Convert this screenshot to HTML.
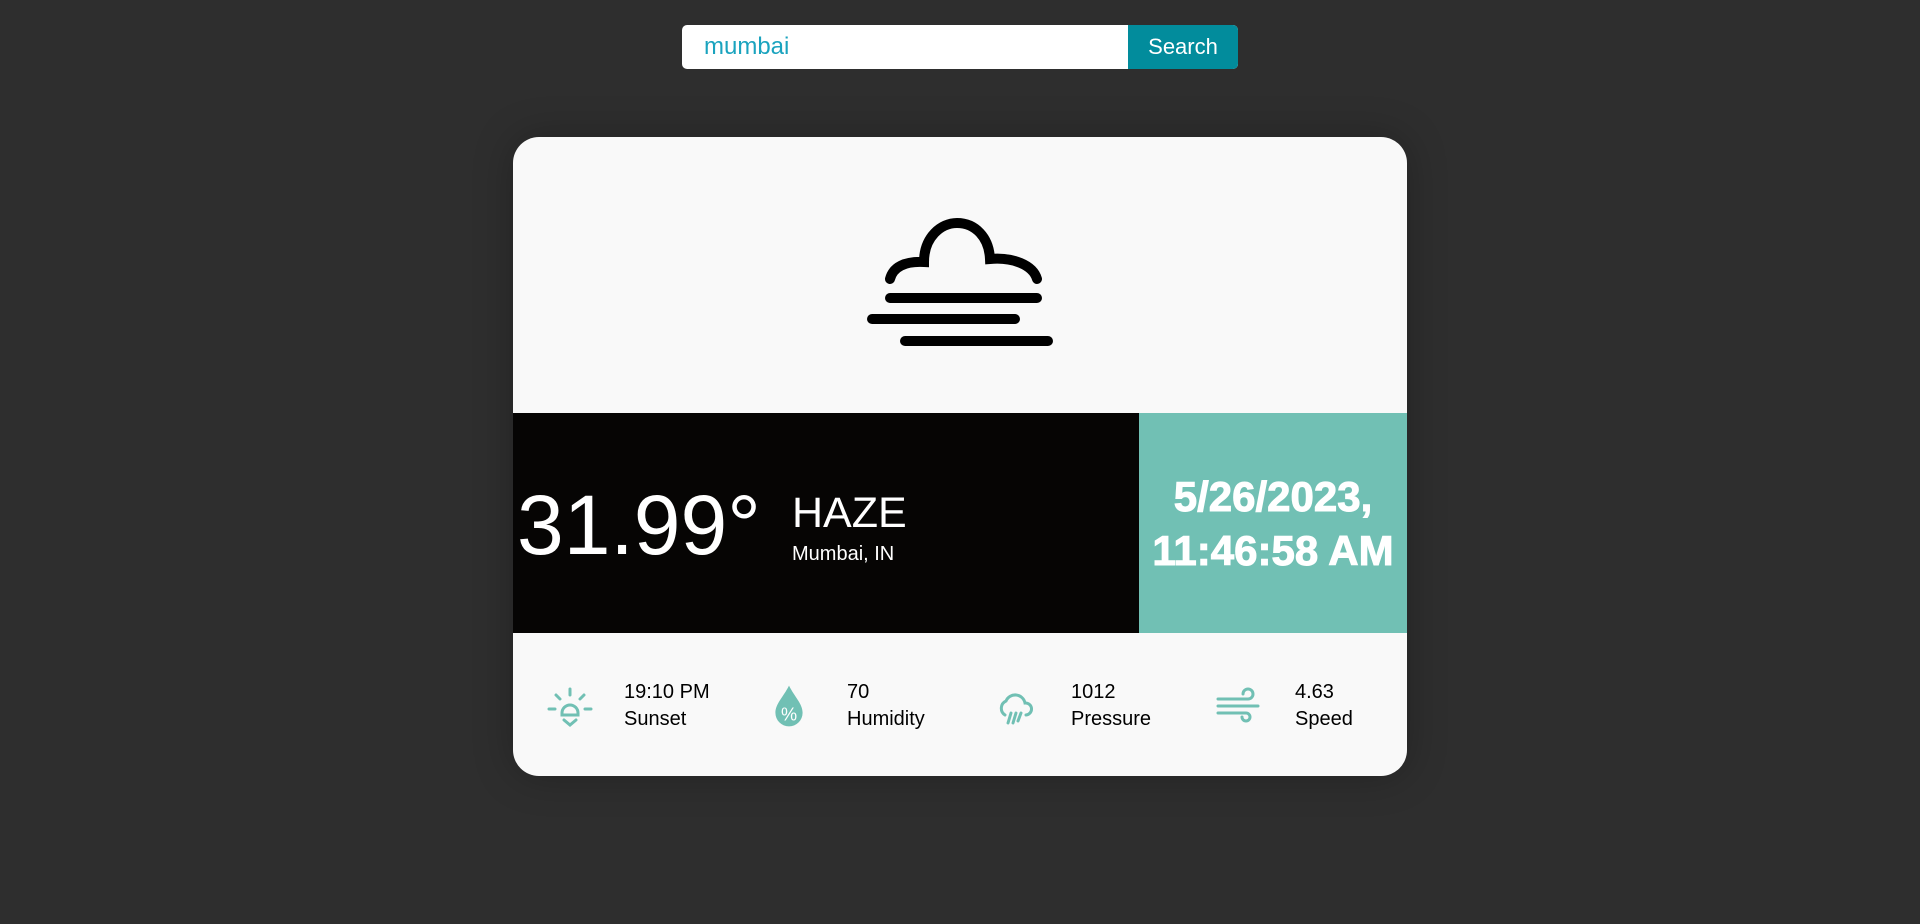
<!DOCTYPE html>
<html><head><style>
*{margin:0;padding:0;box-sizing:border-box}
body{width:1920px;height:924px;background:#2e2e2e;font-family:"Liberation Sans",sans-serif;position:relative;overflow:hidden}
.search{position:absolute;left:682px;top:25px;width:556px;height:44px;background:#fff;border-radius:5px;overflow:hidden}
.search span{position:absolute;left:22px;top:8px;font-size:24px;color:#1aa3be}
.search .btn{position:absolute;right:0;top:0;width:110px;height:44px;background:#028c9c;color:#fff;font-size:22px;text-align:center;line-height:44px}
.card{position:absolute;left:513px;top:137px;width:894px;height:639px;background:#f9f9f9;border-radius:26px;overflow:hidden;box-shadow:0 0 40px rgba(0,0,0,.25)}
.mid{position:absolute;left:0;top:276px;width:894px;height:220px;background:#060504}
.teal{position:absolute;left:626px;top:0;width:268px;height:220px;background:#71c0b4;color:#fff;font-weight:bold;font-size:42px;text-align:center;line-height:54px;padding-top:57px;-webkit-text-stroke:1px #fff}
.temp{position:absolute;left:4px;top:70px;font-size:84px;color:#fff;line-height:1}
.cond{position:absolute;left:279px;top:79px;font-size:43px;color:#fff;line-height:1}
.loc{position:absolute;left:279px;top:130px;font-size:20px;color:#fff}
.item{position:absolute;top:542px;font-size:20px;color:#000;line-height:27px}
.ic{position:absolute;top:550px}
</style></head><body>
<div class="search"><span>mumbai</span><div class="btn">Search</div></div>
<div class="card">
<svg style="position:absolute;left:0;top:0" width="894" height="276" viewBox="0 0 894 276">
<g fill="none" stroke="#000" stroke-width="10" stroke-linecap="round">
<path d="M377 142 C380 130 392 124 411 125 C411 100 428 86 444 86 C462 86 476 100 477 122 C500 120 520 128 524 142"/>
<path d="M377 161 H524"/><path d="M359 182 H502"/><path d="M392 204 H535"/>
</g></svg>
<div class="mid">
<div class="temp">31.99°</div>
<div class="cond">HAZE</div>
<div class="loc">Mumbai, IN</div>
<div class="teal">5/26/2023,<br>11:46:58 AM</div>
</div>
<svg class="ic" style="left:34px" width="46" height="40" viewBox="0 0 46 40"><g fill="none" stroke="#71c0b4" stroke-width="3" stroke-linecap="round"><path d="M23 2v6M9 8l4 4M37 8l-4 4M2 22h6M38 22h6M15 26a8 8 0 0 1 16 0v2H15z"/><path d="M17 33l6 5 6-5"/></g></svg>
<svg class="ic" style="left:259px;top:546px" width="34" height="46" viewBox="0 0 30 40"><path d="M15 2C10 12 3 18 3 26a12 12 0 0 0 24 0C27 18 20 12 15 2z" fill="#71c0b4"/><text x="15" y="33" font-size="16" fill="#fff" text-anchor="middle" font-family="Liberation Sans">%</text></svg>
<svg class="ic" style="left:482px" width="40" height="42" viewBox="0 0 40 42"><g fill="none" stroke="#71c0b4" stroke-width="3" stroke-linecap="round"><path d="M10 28a8 8 0 0 1 1-14 10 10 0 0 1 19 2 6 6 0 0 1 1 12"/><path d="M16 26l-3 10M21 26l-3 10M26 26l-3 8"/></g></svg>
<svg class="ic" style="left:703px" width="46" height="36" viewBox="0 0 46 36"><g fill="none" stroke="#71c0b4" stroke-width="3" stroke-linecap="round"><path d="M2 12h30a5 5 0 1 0-5-5M2 19h40M2 26h28a4 4 0 1 1-4 4"/></g></svg>
<div class="item" style="left:111px">19:10 PM<br>Sunset</div>
<div class="item" style="left:334px">70<br>Humidity</div>
<div class="item" style="left:558px">1012<br>Pressure</div>
<div class="item" style="left:782px">4.63<br>Speed</div>
</div>
</body></html>
